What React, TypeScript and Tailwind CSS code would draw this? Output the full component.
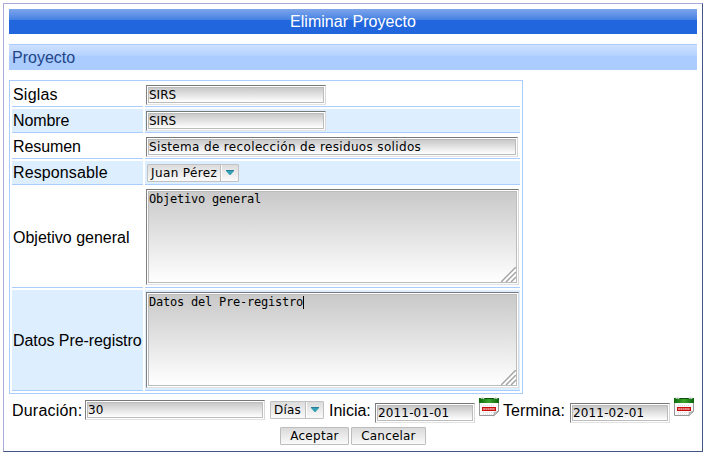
import type { ReactNode } from 'react';

function Field({ className, children }: { className: string; children: ReactNode }) {
  return (
    <div className={`shrink-0 border border-t-[#777] border-l-[#808080] border-r-[#d8d8d8] border-b-[#e2e2e2] bg-white p-px ${className}`}>
      <div className="relative h-full whitespace-nowrap border border-[#bcbcbc] bg-linear-to-b from-[#c9c9c9] to-white">
        {children}
      </div>
    </div>
  );
}

function TextInput({ value, className }: { value: string; className: string }) {
  return (
    <Field className={`h-5 ${className}`}>
      <span className="block font-['DejaVu_Sans',sans-serif] text-[12px] leading-[14px]">{value}</span>
    </Field>
  );
}

function TextArea({ value, caret = false }: { value: string; caret?: boolean }) {
  return (
    <Field className="h-24 w-[373px]">
      <div className="flex font-['DejaVu_Sans_Mono',monospace] text-[12px] leading-[14px] tracking-[-0.22px]">
        <span>{value}</span>
        {caret && <span className="mt-px h-[13px] w-px bg-black" />}
      </div>
      <svg className="absolute right-0 bottom-0" width="15" height="15" viewBox="0 0 15 15">
        <path d="M-1 15 15 -1V15Z" fill="#fff" />
        <path d="M0 15 15 0M5 15 15 5M10 15 15 10" stroke="#a3a3a3" strokeWidth="1.5" />
      </svg>
    </Field>
  );
}

function Select({ value, className }: { value: string; className: string }) {
  return (
    <div className={`flex h-[18px] shrink-0 rounded-[1px] border border-[#c2c2c2] bg-linear-to-b from-[#dcdcdc] to-[#fafafa] font-['DejaVu_Sans',sans-serif] text-[12px] leading-4 whitespace-nowrap ${className}`}>
      <span className="flex-1 border-r border-[#bcbcbc] pl-[3px]">{value}</span>
      <span className="flex w-[17px] justify-center border-l border-white pt-[5px]">
        <svg width="8" height="5" viewBox="0 0 8 5">
          <path d="M0 0H8V1L4.5 5H3.5L0 1Z" fill="#35a0b5" />
          <path d="M0 0H8V1H0Z" fill="#2a7f98" />
        </svg>
      </span>
    </div>
  );
}

function Button({ label, className }: { label: string; className: string }) {
  return (
    <div className={`h-[18px] rounded-[1px] border border-[#bdbdbd] bg-linear-to-b from-[#dadada] to-[#fafafa] text-center font-['DejaVu_Sans',sans-serif] text-[12px] leading-4 ${className}`}>
      {label}
    </div>
  );
}

function CalendarIcon({ className }: { className: string }) {
  return (
    <svg className={`shrink-0 ${className}`} width="20" height="20" viewBox="0 0 20 20">
      <defs>
        <linearGradient id="calGreen" x1="0" x2="1">
          <stop offset="0" stopColor="#0c6a0c" />
          <stop offset=".5" stopColor="#3ba52c" />
          <stop offset="1" stopColor="#0b620b" />
        </linearGradient>
      </defs>
      <path d="M.5 5V18.5H15L19.5 14V5Z" fill="#fafafa" stroke="#999" />
      <path d="M14.5 19 15.5 15.5 19.5 14.5Z" fill="#ddd" stroke="#888" strokeWidth=".7" />
      <path d="M0 1H20V6H0Z" fill="url(#calGreen)" />
      <path d="M5 1H15V2H5Z" fill="#0b500b" />
      <path d="M2 1.5Q4 0 5 2M15 1.5Q17 0 18 2" stroke="#c8d0c8" strokeWidth="1.4" fill="none" />
      <path d="M4 8.5H16M4 15.5H16M4 17.5H13" stroke="#ddd" strokeDasharray="1 1" />
      <path d="M3 10H17V14H3Z" fill="#c90d0d" />
      <path d="M4 12H16" stroke="#fff" strokeDasharray="2 .3" />
    </svg>
  );
}

function Row({ label, striped = false, tall = false, tracking, children }: { label: string; striped?: boolean; tall?: boolean; tracking: string; children: ReactNode }) {
  const cell = `border-b border-[#aaccff] ${striped ? 'bg-[#ddeeff]' : 'bg-white'}`;
  return (
    <div className={`flex gap-0.5 ${tall ? 'h-[101px]' : 'h-6'}`}>
      <div className={`flex w-[131px] items-center pl-px text-[16px] leading-none whitespace-nowrap ${tall ? 'pt-0.5' : ''} ${tracking} ${cell}`}>{label}</div>
      <div className={`w-[375px] pl-px pt-0.5 ${cell}`}>{children}</div>
    </div>
  );
}

export default function App() {
  return (
    <div className="h-[454px] w-[705px] overflow-hidden bg-white pt-[3px] pl-[3px] font-['Liberation_Sans',Arial,sans-serif] text-[16px] text-black">
      <div className="h-[449px] w-[700px] border border-t-[#aaaadd] border-l-[#aaaadd] border-r-[#445588] border-b-[#445588] px-[5px] pt-[5px]">
        <h1 className="h-[25px] w-[688px] bg-[linear-gradient(to_bottom,#7ea6eb_0,#4480e2_11px,#2266dd_11px)] text-center text-[16px] leading-[25px] tracking-[0.03px] text-white">
          Eliminar Proyecto
        </h1>
        <h2 className="mt-2.5 h-[26px] w-[688px] border-t border-[#aaccff] bg-[linear-gradient(to_bottom,#cfe1ff_0,#b3d1ff_11px,#aaccff_11px)] pl-[3px] text-[16px] leading-[25px] text-[#224488]">
          Proyecto
        </h2>
        <div className="mt-2.5 flex h-[314px] w-[514px] flex-col gap-0.5 border border-[#aaccff] p-0.5">
          <Row label="Siglas" tracking="tracking-[0.2px]"><TextInput value="SIRS" className="w-[180px]" /></Row>
          <Row label="Nombre" striped tracking="tracking-[-0.1px]"><TextInput value="SIRS" className="w-[180px]" /></Row>
          <Row label="Resumen" tracking="tracking-[-0.1px]"><TextInput value="Sistema de recolección de residuos solidos" className="w-[372px] tracking-[0.35px]" /></Row>
          <Row label="Responsable" striped tracking="tracking-[0.12px]"><Select value="Juan Pérez" className="mt-px ml-px w-[92px] tracking-[0.38px]" /></Row>
          <Row label="Objetivo general" tall tracking="tracking-[0px]"><TextArea value="Objetivo general" /></Row>
          <Row label="Datos Pre-registro" striped tall tracking="tracking-[-0.07px]"><TextArea value="Datos del Pre-registro" caret /></Row>
        </div>
        <div className="flex h-[33px] items-start pl-[3px] leading-[18px] whitespace-nowrap">
          <span className="mt-2 w-[73px] shrink-0 tracking-[0.2px]">Duración:</span>
          <TextInput value="30" className="mt-1.5 w-[180px] tracking-[0.2px]" />
          <Select value="Días" className="mt-[7px] ml-[5px] w-[54px] tracking-[0.2px]" />
          <span className="mt-2 ml-[5px] w-[46px] shrink-0 tracking-[0px]">Inicia:</span>
          <TextInput value="2011-01-01" className="mt-[9px] w-[100px] tracking-[0.15px]" />
          <CalendarIcon className="mt-[3px] ml-1" />
          <span className="mt-2 ml-1 w-[67px] shrink-0 tracking-[0.1px]">Termina:</span>
          <TextInput value="2011-02-01" className="mt-[9px] w-[100px] tracking-[0.15px]" />
          <CalendarIcon className="mt-[3px] ml-1" />
        </div>
        <div className="flex justify-center gap-0.5">
          <Button label="Aceptar" className="w-[69px] tracking-[0.3px]" />
          <Button label="Cancelar" className="w-[75px] tracking-[0.2px]" />
        </div>
      </div>
    </div>
  );
}
